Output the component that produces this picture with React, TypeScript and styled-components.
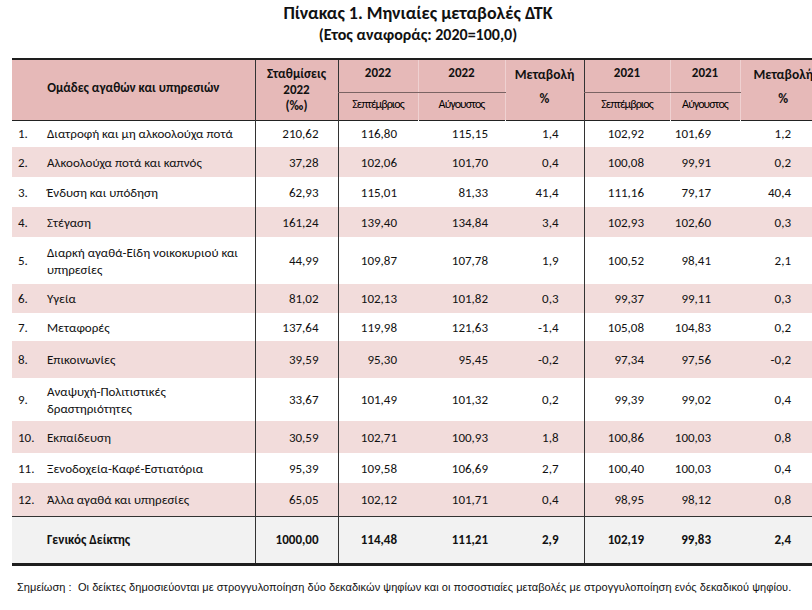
import React from "react";
import styled, { createGlobalStyle } from "styled-components";

const FONT = `"Carlito", "Lato", "Open Sans", "Noto Sans", sans-serif`;

const Global = createGlobalStyle`
  html, body { margin: 0; padding: 0; background: #ffffff; }
  body { width: 812px; height: 610px; overflow: hidden; }
`;

const Page = styled.div`
  width: 836px;
  font-family: ${FONT};
  color: #111;
`;

const Title = styled.h1`
  margin: 0;
  padding-top: 2px;
  text-align: center;
  font-size: 18px;
  font-weight: 700;
  line-height: 22px;
`;

const Subtitle = styled.h2`
  margin: 0;
  text-align: center;
  font-size: 16px;
  font-weight: 700;
  line-height: 22px;
`;

const TableWrap = styled.div`
  padding: 12px 0 0 12px;
`;

const Table = styled.table`
  border-collapse: collapse;
  table-layout: fixed;
  width: 814px;
  border-top: 2px solid #1e1e1e;
  border-bottom: 3px solid #1e1e1e;
  font-size: 13px;
`;

const HeadRow = styled.tr<{ $h: number }>`
  height: ${(p) => p.$h}px;
  background: #e6b9b8;
`;

const Th = styled.th<{ $dark?: boolean; $under?: boolean; $pb?: number; $faint?: boolean }>`
  padding: 0 0 ${(p) => p.$pb ?? 0}px 0;
  font-weight: 700;
  font-size: 13px;
  text-align: center;
  vertical-align: middle;
  line-height: 16px;
  border-left: ${(p) => (p.$dark ? "1px solid #333" : p.$faint ? "1px solid rgba(255,255,255,0.35)" : "none")};
  border-bottom: ${(p) => (p.$under ? "1px solid #7a6363" : "none")};
`;

const MonthTh = styled(Th)`
  font-weight: 400;
  font-size: 12px;
  letter-spacing: -0.9px;
  color: #000;
`;

const HeadStack = styled.div`
  display: flex;
  flex-direction: column;
  align-items: center;
  gap: 8px;
  font-size: 13.5px;
`;

const HeadBottom = styled.tr`
  border-bottom: 1.5px solid #222;
`;

const BodyRow = styled.tr<{ $h: number; $tone: "white" | "pink" | "grey" }>`
  height: ${(p) => p.$h}px;
  background: ${(p) => (p.$tone === "pink" ? "#f2dcdb" : p.$tone === "grey" ? "#f2f2f2" : "#ffffff")};
  font-weight: ${(p) => (p.$tone === "grey" ? 700 : 400)};
  border-top: ${(p) => (p.$tone === "grey" ? "1px solid #333" : "none")};
`;

const Td = styled.td<{ $pr: number; $dark?: boolean }>`
  padding: 0 ${(p) => p.$pr}px 0 0;
  text-align: right;
  vertical-align: middle;
  white-space: nowrap;
  border-left: ${(p) => (p.$dark ? "1px solid #333" : "none")};
`;

const NameTd = styled.td`
  padding: 0 0 0 6px;
  vertical-align: middle;
`;

const NameBox = styled.div`
  display: flex;
  align-items: center;
  line-height: 17px;
`;

const Num = styled.span`
  flex: 0 0 29px;
`;

const Label = styled.span`
  flex: 1;
`;

const Note = styled.p`
  margin: 15px 0 0 17px;
  font-family: "Liberation Sans", Arial, sans-serif;
  font-size: 11px;
  letter-spacing: 0.05px;
  color: #111;
  white-space: nowrap;
`;

type Row = {
  n: string;
  name: React.ReactNode;
  v: string[];
  h: number;
};

const rows: Row[] = [
  { n: "1.", name: "Διατροφή και μη αλκοολούχα ποτά", v: ["210,62", "116,80", "115,15", "1,4", "102,92", "101,69", "1,2"], h: 27 },
  { n: "2.", name: "Αλκοολούχα ποτά και καπνός", v: ["37,28", "102,06", "101,70", "0,4", "100,08", "99,91", "0,2"], h: 30 },
  { n: "3.", name: "Ένδυση και υπόδηση", v: ["62,93", "115,01", "81,33", "41,4", "111,16", "79,17", "40,4"], h: 30 },
  { n: "4.", name: "Στέγαση", v: ["161,24", "139,40", "134,84", "3,4", "102,93", "102,60", "0,3"], h: 30 },
  {
    n: "5.",
    name: (
      <>
        Διαρκή αγαθά-Είδη νοικοκυριού και
        <br />
        υπηρεσίες
      </>
    ),
    v: ["44,99", "109,87", "107,78", "1,9", "100,52", "98,41", "2,1"],
    h: 47,
  },
  { n: "6.", name: "Υγεία", v: ["81,02", "102,13", "101,82", "0,3", "99,37", "99,11", "0,3"], h: 29 },
  { n: "7.", name: "Μεταφορές", v: ["137,64", "119,98", "121,63", "-1,4", "105,08", "104,83", "0,2"], h: 28 },
  { n: "8.", name: "Επικοινωνίες", v: ["39,59", "95,30", "95,45", "-0,2", "97,34", "97,56", "-0,2"], h: 37 },
  {
    n: "9.",
    name: (
      <>
        Αναψυχή-Πολιτιστικές
        <br />
        δραστηριότητες
      </>
    ),
    v: ["33,67", "101,49", "101,32", "0,2", "99,39", "99,02", "0,4"],
    h: 43,
  },
  { n: "10.", name: "Εκπαίδευση", v: ["30,59", "102,71", "100,93", "1,8", "100,86", "100,03", "0,8"], h: 32 },
  { n: "11.", name: "Ξενοδοχεία-Καφέ-Εστιατόρια", v: ["95,39", "109,58", "106,69", "2,7", "100,40", "100,03", "0,4"], h: 30 },
  { n: "12.", name: "Άλλα αγαθά και υπηρεσίες", v: ["65,05", "102,12", "101,71", "0,4", "98,95", "98,12", "0,8"], h: 33 },
];

const total = ["1000,00", "114,48", "111,21", "2,9", "102,19", "99,83", "2,4"];

const colWidths = [243, 83, 80, 87, 79, 86, 70, 86];
const padRight = [19, 21, 17, 25, 26, 29, 35];
const darkLeft = [true, true, false, false, true, false, false];

function Values({ v }: { v: string[] }) {
  return (
    <>
      {v.map((x, i) => (
        <Td key={i} $pr={padRight[i]} $dark={darkLeft[i]}>
          {x}
        </Td>
      ))}
    </>
  );
}

export default function App() {
  return (
    <Page>
      <Global />
      <Title>Πίνακας 1. Μηνιαίες μεταβολές ΔΤΚ</Title>
      <Subtitle>(Ετος αναφοράς: 2020=100,0)</Subtitle>
      <TableWrap>
        <Table>
          <colgroup>
            {colWidths.map((w, i) => (
              <col key={i} style={{ width: w }} />
            ))}
          </colgroup>
          <thead>
            <HeadRow $h={33}>
              <Th rowSpan={2} $pb={4}>Ομάδες αγαθών και υπηρεσιών</Th>
              <Th rowSpan={2} $dark $pb={0}>
                Σταθμίσεις
                <br />
                2022
                <br />
                (‰)
              </Th>
              <Th $dark $under $pb={6}>2022</Th>
              <Th $under $faint $pb={6}>2022</Th>
              <Th rowSpan={2} $faint $pb={6}>
                <HeadStack>
                  <span>Μεταβολή</span>
                  <span>%</span>
                </HeadStack>
              </Th>
              <Th $dark $under $pb={6}>2021</Th>
              <Th $under $faint $pb={6}>2021</Th>
              <Th rowSpan={2} $faint $pb={6}>
                <HeadStack>
                  <span>Μεταβολή</span>
                  <span>%</span>
                </HeadStack>
              </Th>
            </HeadRow>
            <HeadRow $h={28} as={HeadBottom}>
              <MonthTh $dark $pb={5}>Σεπτέμβριος</MonthTh>
              <MonthTh $faint $pb={5}>Αύγουστος</MonthTh>
              <MonthTh $dark $pb={5}>Σεπτέμβριος</MonthTh>
              <MonthTh $faint $pb={5}>Αύγουστος</MonthTh>
            </HeadRow>
          </thead>
          <tbody>
            {rows.map((r, i) => (
              <BodyRow key={r.n} $h={r.h} $tone={i % 2 === 1 ? "pink" : "white"}>
                <NameTd>
                  <NameBox>
                    <Num>{r.n}</Num>
                    <Label>{r.name}</Label>
                  </NameBox>
                </NameTd>
                <Values v={r.v} />
              </BodyRow>
            ))}
            <BodyRow $h={48} $tone="grey">
              <NameTd>
                <NameBox>
                  <Num />
                  <Label>Γενικός Δείκτης</Label>
                </NameBox>
              </NameTd>
              <Values v={total} />
            </BodyRow>
          </tbody>
        </Table>
      </TableWrap>
      <Note>
        Σημείωση :&nbsp; Οι δείκτες δημοσιεύονται με στρογγυλοποίηση δύο δεκαδικών ψηφίων και οι ποσοστιαίες μεταβολές με στρογγυλοποίηση ενός δεκαδικού ψηφίου.
      </Note>
    </Page>
  );
}
